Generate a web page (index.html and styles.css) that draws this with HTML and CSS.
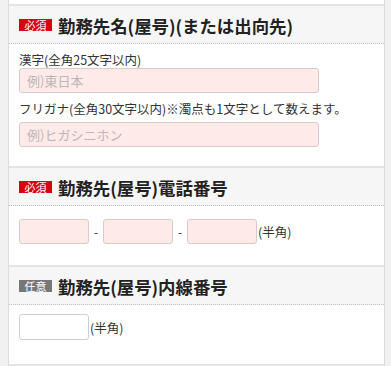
FILE: index.html
```html
<!DOCTYPE html>
<html lang="ja">
<head>
<meta charset="utf-8">
<link rel="stylesheet" href="styles.css">
</head>
<body>
<div class="wrap">
  <div class="prev"></div>
  <section class="sec sec1">
    <div class="head"><span class="badge req">必須</span><h2 class="title">勤務先名(屋号)(または出向先)</h2></div>
    <div class="body b1">
      <div class="label l1">漢字(全角25文字以内)</div>
      <input class="inp wide" type="text" placeholder="例)東日本">
      <div class="label l2">フリガナ(全角30文字以内)※濁点も1文字として数えます。</div>
      <input class="inp wide i2" type="text" placeholder="例)ヒガシニホン">
    </div>
  </section>
  <section class="sec">
    <div class="head"><span class="badge req">必須</span><h2 class="title">勤務先(屋号)電話番号</h2></div>
    <div class="body b2">
      <div class="row">
        <input class="inp small" type="text"><span class="dash">-</span><input class="inp small" type="text"><span class="dash">-</span><input class="inp small" type="text"><span class="note">(半角)</span>
      </div>
    </div>
  </section>
  <section class="sec">
    <div class="head"><span class="badge opt">任意</span><h2 class="title">勤務先(屋号)内線番号</h2></div>
    <div class="body b3">
      <div class="row">
        <input class="inp small white" type="text"><span class="note">(半角)</span>
      </div>
    </div>
  </section>
  <div class="next"></div>
</div>
</body>
</html>
```
FILE: styles.css
```css
html, body {
  margin: 0;
  padding: 0;
}
body {
  background: #f1f1f1;
  font-family: "Noto Sans CJK JP", "Noto Sans", sans-serif;
  color: #333;
  height: 366px;
  overflow: hidden;
}
.wrap {
  margin: 0 6px 0 8px;
  border-left: 1px solid #dcdcdc;
  border-right: 1px solid #dcdcdc;
  background: #fff;
}
.prev {
  height: 4px;
  background: #fff;
}
.sec {
  border-top: 2px solid #e4e4e4;
}
.head {
  height: 37px;
  background: #f6f6f6;
  border-bottom: 1px dotted #bdbdbd;
  display: flex;
  align-items: center;
  padding-left: 10px;
}
.badge {
  display: inline-block;
  width: 33px;
  height: 12px;
  line-height: 12px;
  font-size: 11px;
  color: #fff;
  text-align: center;
  margin-right: 6px;
}
.req { background: #d9000f; }
.opt { background: #777; }
.title {
  margin: 0;
  font-size: 17.4px;
  font-weight: bold;
  color: #222;
  line-height: 20px;
  position: relative;
  top: 1px;
}
.body {
  padding-left: 10px;
}
.b1 { padding-top: 8px; padding-bottom: 19px; }
.b2 { padding-top: 13px; padding-bottom: 21px; }
.b3 { padding-top: 9px; padding-bottom: 24px; }
.label {
  font-size: 12.5px;
  line-height: 16px;
  color: #333;
}
.l2 { margin-top: 8px; margin-bottom: 5px; }
.inp {
  display: block;
  box-sizing: border-box;
  height: 25px;
  margin: 0;
  padding: 0 0 0 7px;
  border: 1px solid #dccaca;
  border-radius: 3px;
  background: #ffeaea;
  font-family: "Noto Sans CJK JP", sans-serif;
  font-size: 13px;
  color: #333;
  outline: none;
}
.inp::placeholder { color: #bdb6b6; }
.wide { width: 300px; }
.small { width: 70px; }
.white { background: #fff; border-color: #cfcfcf; height: 26px; }
.row {
  display: flex;
  align-items: center;
}
.dash {
  width: 14px;
  text-align: center;
  font-size: 12px;
  color: #333;
}
.note {
  font-size: 12.5px;
  color: #333;
  margin-left: 1px;
}
.next {
  border-top: 2px solid #e4e4e4;
  height: 10px;
  background: #f1f1f1;
}
```
